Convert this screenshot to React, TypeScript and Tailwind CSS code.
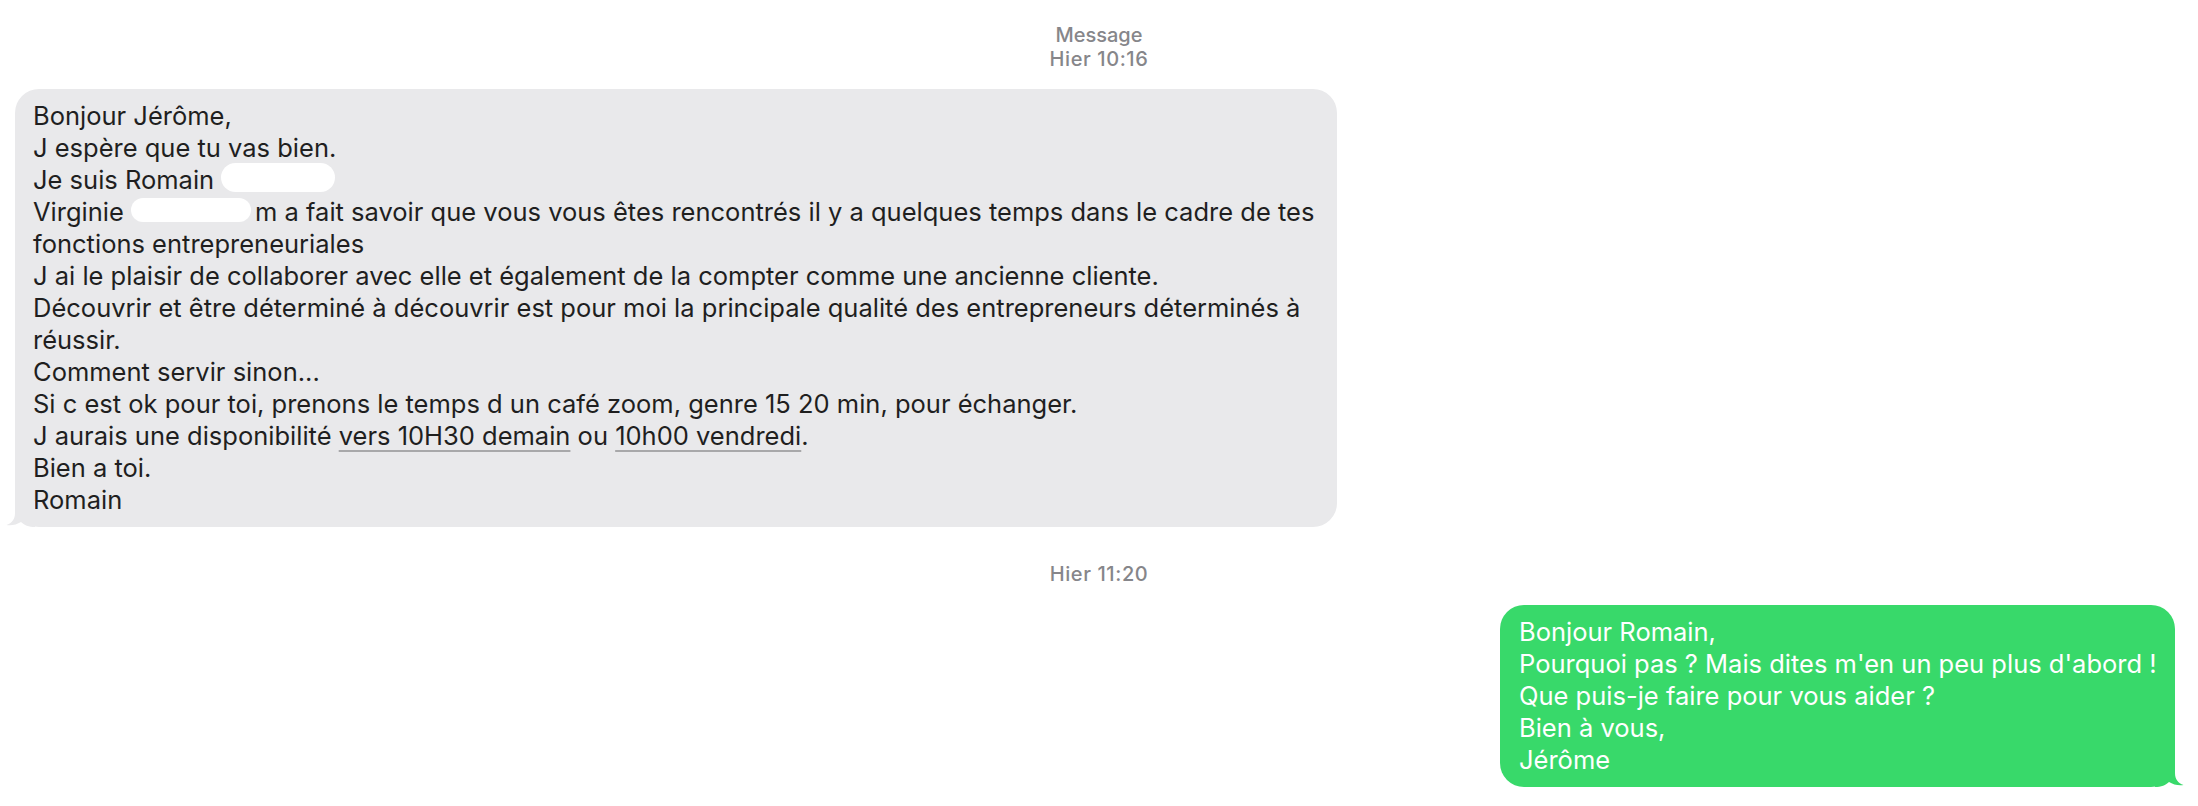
import React from "react";

const font = { fontFamily: "Inter, 'Noto Sans', sans-serif" };

function Pill({ w, h, shift }: { w: string; h: string; shift: string }) {
  return <span className={`inline-block align-top rounded-full bg-white ${w} ${h} ${shift}`} />;
}

function Tail({ color, mirror }: { color: string; mirror?: boolean }) {
  return (
    <svg
      width="32"
      height="26"
      viewBox="0 0 32 26"
      className={`absolute bottom-0 ${mirror ? "-right-[12px] -scale-x-100" : "-left-[12px]"}`}
    >
      <path
        d="M12 0 L12 12 C12 18 9 22 3.5 24 C8 25 14 23.5 18 21 C21 24 26 26 32 26 L32 0 Z"
        fill={color}
      />
    </svg>
  );
}

export default function App() {
  const link = "underline decoration-[#a8a8aa] decoration-[2px] underline-offset-[5px]";
  return (
    <div className="w-full h-[806px] bg-white flex flex-col text-[#1f1f1f]" style={font}>
      <div className="pt-[23px] text-center text-[20px] leading-[24px] font-medium text-[#86868a]">
        <div>Message</div>
        <div className="tracking-[0.6px]">Hier 10:16</div>
      </div>

      <div className="mt-[18px] pl-[15px]">
        <div className="relative w-[1322px] rounded-[24px] bg-[#e9e9eb] pl-[18px] pr-[20px] py-[11px] text-[25.5px] leading-[32px] whitespace-nowrap">
          <div>Bonjour Jérôme,</div>
          <div>J espère que tu vas bien.</div>
          <div>
            Je suis Romain <Pill w="w-[114px]" h="h-[29px]" shift="-translate-y-px" />
          </div>
          <div>
            Virginie <Pill w="w-[120px]" h="h-[24px]" shift="translate-y-[2px]" />
            <span className="ml-[4px]">m a fait savoir que vous vous êtes rencontrés il y a quelques temps dans le cadre de tes</span>
          </div>
          <div>fonctions entrepreneuriales</div>
          <div>J ai le plaisir de collaborer avec elle et également de la compter comme une ancienne cliente.</div>
          <div>Découvrir et être déterminé à découvrir est pour moi la principale qualité des entrepreneurs déterminés à</div>
          <div>réussir.</div>
          <div>Comment servir sinon...</div>
          <div>Si c est ok pour toi, prenons le temps d un café zoom, genre 15 20 min, pour échanger.</div>
          <div>
            J aurais une disponibilité <span className={link}>vers 10H30 demain</span> ou{" "}
            <span className={link}>10h00 vendredi</span>.
          </div>
          <div>Bien a toi.</div>
          <div>Romain</div>
          <Tail color="#e9e9eb" />
        </div>
      </div>

      <div className="mt-[35px] text-center text-[20px] leading-[24px] font-medium tracking-[0.6px] text-[#86868a]">Hier 11:20</div>

      <div className="mt-[19px] flex justify-end pr-[23px]">
        <div className="relative w-[675px] rounded-[24px] bg-[#38d96a] pl-[19px] pr-[18px] py-[11px] text-[25.5px] leading-[32px] text-white whitespace-nowrap">
          <div>Bonjour Romain,</div>
          <div>Pourquoi pas ? Mais dites m'en un peu plus d'abord !</div>
          <div>Que puis-je faire pour vous aider ?</div>
          <div>Bien à vous,</div>
          <div>Jérôme</div>
          <Tail color="#38d96a" mirror />
        </div>
      </div>
    </div>
  );
}
